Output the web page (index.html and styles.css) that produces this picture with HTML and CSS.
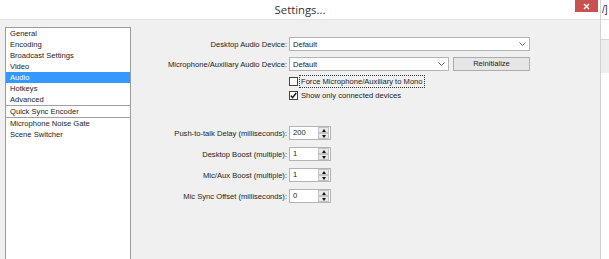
FILE: index.html
```html
<!DOCTYPE html>
<html lang="en">
<head>
  <meta charset="UTF-8" />
  <title>Settings...</title>
  <link rel="stylesheet" href="styles.css">
</head>
<body>
  <div class="screen">
    <div class="dialog">
      <div class="titlebar">
        <span></span>
        <span class="title">Settings...</span>
        <span class="close">
          <svg width="7" height="7" viewBox="0 0 7 7"><path d="M1 1L6 6M6 1L1 6" stroke="#fff" stroke-width="1.4"/></svg>
        </span>
      </div>

      <div class="content">
        <ul class="nav">
          <li>General</li>
          <li>Encoding</li>
          <li>Broadcast Settings</li>
          <li>Video</li>
          <li class="active">Audio</li>
          <li>Hotkeys</li>
          <li class="sep">Advanced</li>
          <li class="sep">Quick Sync Encoder</li>
          <li>Microphone Noise Gate</li>
          <li>Scene Switcher</li>
        </ul>

        <div class="panel">
          <div class="group devices">
            <div class="row">
              <span class="lbl">Desktop Audio Device:</span>
              <div class="select wide">
                <span>Default</span>
                <svg width="7" height="4" viewBox="0 0 7 4"><path d="M0.5 0.5L3.5 3.5L6.5 0.5" fill="none" stroke="#666"/></svg>
              </div>
            </div>
            <div class="row">
              <span class="lbl">Microphone/Auxiliary Audio Device:</span>
              <div class="controls">
                <div class="select narrow">
                  <span>Default</span>
                  <svg width="7" height="4" viewBox="0 0 7 4"><path d="M0.5 0.5L3.5 3.5L6.5 0.5" fill="none" stroke="#666"/></svg>
                </div>
                <div class="btn">Reinitialize</div>
              </div>
            </div>
          </div>

          <div class="group checks">
            <div class="row">
              <span></span>
              <div class="check">
                <span class="box"></span>
                <span class="text focus">Force Microphone/Auxiliary to Mono</span>
              </div>
            </div>
            <div class="row">
              <span></span>
              <div class="check">
                <span class="box">
                  <svg width="7" height="7" viewBox="0 0 7 7"><path d="M0.8 3.6L2.6 5.6L6.2 1" fill="none" stroke="#111" stroke-width="1.4"/></svg>
                </span>
                <span class="text">Show only connected devices</span>
              </div>
            </div>
          </div>

          <div class="group spins">
            <div class="row">
              <span class="lbl">Push-to-talk Delay (milliseconds):</span>
              <div class="spin"><span class="val">200</span><span class="arrows"><i class="up"></i><i class="down"></i></span></div>
            </div>
            <div class="row">
              <span class="lbl">Desktop Boost (multiple):</span>
              <div class="spin"><span class="val">1</span><span class="arrows"><i class="up"></i><i class="down"></i></span></div>
            </div>
            <div class="row">
              <span class="lbl">Mic/Aux Boost (multiple):</span>
              <div class="spin"><span class="val">1</span><span class="arrows"><i class="up"></i><i class="down"></i></span></div>
            </div>
            <div class="row">
              <span class="lbl">Mic Sync Offset (milliseconds):</span>
              <div class="spin"><span class="val">0</span><span class="arrows"><i class="up"></i><i class="down"></i></span></div>
            </div>
          </div>
        </div>
      </div>
    </div>

    <div class="edge">
      <div class="edge-top">/]</div>
      <div class="edge-gap"></div>
      <div class="edge-band"></div>
    </div>
  </div>
</body>
</html>
```

FILE: styles.css
```css
body {
  margin: 0;
  font-family: "Liberation Sans", Arial, sans-serif;
  font-size: 7.6px;
  color: #222;
  background: #fff;
}
.screen {
  display: flex;
  width: 609px;
  height: 259px;
  overflow: hidden;
}
.dialog {
  width: 600px;
  flex: none;
  display: flex;
  flex-direction: column;
  border-right: 1px solid #d2d2d2;
}
.titlebar {
  height: 19px;
  background: #fff;
  border-bottom: 1px solid #e2e2e2;
  display: grid;
  grid-template-columns: 1fr auto 1fr;
  align-items: start;
}
.title {
  font-family: "Open Sans", sans-serif;
  font-size: 11.3px;
  line-height: 19px;
  color: #333;
}
.close {
  justify-self: end;
  margin-right: 2px;
  width: 23px;
  height: 12px;
  background: #c75050;
  display: flex;
  align-items: center;
  justify-content: center;
}
.content {
  flex: 1;
  min-height: 0;
  display: flex;
  padding-top: 7px;
  background: #f0f0f0;
}
.nav {
  list-style: none;
  margin: 0 0 0 5px;
  padding: 0;
  width: 124px;
  border: 1px solid #9c9c9c;
  border-bottom: none;
  background: #fff;
}
.nav li {
  height: 11px;
  line-height: 11px;
  padding-left: 4px;
  white-space: nowrap;
}
.nav li.active {
  background: #3399ff;
  color: #fff;
}
.nav li.sep {
  border-bottom: 1px solid #a0a0a0;
}
.panel {
  flex: 1;
  display: flex;
  flex-direction: column;
  padding-top: 10px;
}
.group {
  display: flex;
  flex-direction: column;
}
.devices {
  gap: 6px;
}
.checks {
  margin-top: 4px;
  gap: 1px;
}
.spins {
  margin-top: 24px;
  gap: 7px;
}
.row {
  display: grid;
  grid-template-columns: 156px auto;
  column-gap: 2px;
  align-items: center;
  justify-content: start;
}
.lbl {
  text-align: right;
  white-space: nowrap;
}
.controls {
  display: flex;
}
.select {
  box-sizing: border-box;
  height: 14px;
  border: 1px solid #b4b4b4;
  background: #fff;
  display: flex;
  align-items: center;
  justify-content: space-between;
  padding: 0 3px 0 3px;
}
.wide {
  width: 241px;
}
.narrow {
  width: 160px;
}
.btn {
  box-sizing: border-box;
  margin-left: 4px;
  width: 77px;
  height: 14px;
  line-height: 12px;
  text-align: center;
  border: 1px solid #acacac;
  background: #e6e6e6;
}
.check {
  display: flex;
  align-items: center;
  height: 13px;
}
.box {
  box-sizing: border-box;
  width: 9px;
  height: 9px;
  border: 1px solid #444;
  background: #fff;
  display: flex;
  align-items: center;
  justify-content: center;
}
.text {
  margin-left: 1px;
  padding: 0 1px;
  line-height: 11px;
  border: 1px dotted transparent;
  white-space: nowrap;
}
.text.focus {
  border-color: #333;
}
.spin {
  box-sizing: border-box;
  width: 42px;
  height: 14px;
  border: 1px solid #b4b4b4;
  background: #fff;
  display: flex;
}
.val {
  flex: 1;
  padding-left: 3px;
  line-height: 12px;
}
.arrows {
  width: 11px;
  margin-right: 1px;
  display: flex;
  flex-direction: column;
}
.arrows i {
  box-sizing: border-box;
  height: 6px;
  border: 1px solid #c4c4c4;
  background: #e9e9e9;
  display: flex;
  align-items: center;
  justify-content: center;
}
.arrows i::after {
  content: "";
  border-left: 2.5px solid transparent;
  border-right: 2.5px solid transparent;
}
.arrows .up::after {
  border-bottom: 3px solid #111;
}
.arrows .down::after {
  border-top: 3px solid #111;
}
.edge {
  flex: 1;
  background: #fff;
}
.edge-top {
  height: 19px;
  border-bottom: 1px solid #dcdcdc;
  font-size: 10px;
  line-height: 19px;
  color: #333;
  padding-left: 1px;
}
.edge-gap {
  height: 19px;
}
.edge-band {
  height: 33px;
  border-top: 1px solid #d6d6d6;
  background: #eeeeee;
}
```
